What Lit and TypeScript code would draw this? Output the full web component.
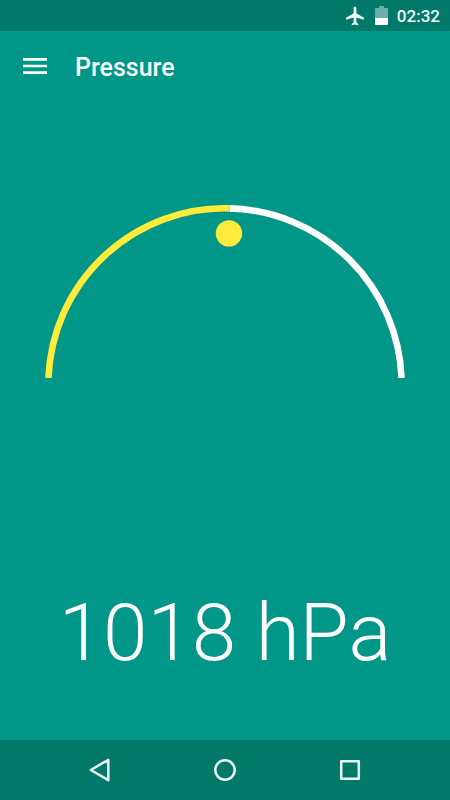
import { LitElement, html, css, svg } from "lit";
import { customElement, property } from "lit/decorators.js";

const CX = 180;
const CY = 180;
const RADIUS = 176.7;

/** Point on the dial; 0 degrees is straight up, negative is to the left. */
function polar(angle: number, radius: number): [number, number] {
  const a = (angle * Math.PI) / 180;
  return [CX + radius * Math.sin(a), CY - radius * Math.cos(a)];
}

function arc(from: number, to: number): string {
  const [x1, y1] = polar(from, RADIUS);
  const [x2, y2] = polar(to, RADIUS);
  return `M${x1} ${y1}A${RADIUS} ${RADIUS} 0 0 1 ${x2} ${y2}`;
}

@customElement("pressure-gauge")
export class PressureGauge extends LitElement {
  /** Needle angle in degrees from the top of the dial. */
  @property({ type: Number }) angle = 0;

  static styles = css`
    :host {
      display: block;
    }
    svg {
      display: block;
      width: 100%;
      height: auto;
    }
    .track,
    .fill {
      fill: none;
      stroke-width: 6.6;
    }
    .track {
      stroke: #fff;
    }
    .fill {
      stroke: #ffeb3b;
    }
    .knob {
      fill: #ffeb3b;
    }
  `;

  render() {
    const end = 87.7;
    const [kx, ky] = polar(this.angle, 151.7);
    return html`<svg viewBox="0 0 360 180" role="img" aria-label="Pressure gauge">
      ${svg`
        <path class="track" d=${arc(this.angle, end)} />
        <path class="fill" d=${arc(-end, this.angle)} />
        <circle class="knob" cx=${kx} cy=${ky} r="13.2" />
      `}
    </svg>`;
  }
}

@customElement("app-root")
export class AppRoot extends LitElement {
  static styles = css`
    :host {
      display: flex;
      flex-direction: column;
      min-height: 100vh;
      background: #009688;
      color: #fff;
      font-family: Roboto, sans-serif;
    }
    .status {
      display: flex;
      align-items: center;
      justify-content: flex-end;
      gap: 9px;
      height: 31px;
      padding-right: 10px;
      background: #00796b;
      color: #f2f8f7;
      font-size: 17px;
      font-weight: 500;
      line-height: 32px;
    }
    .plane {
      width: 22px;
      height: 22px;
    }
    .battery {
      width: 13px;
      height: 19px;
    }
    .appbar {
      display: flex;
      align-items: center;
      gap: 28px;
      height: 70px;
      padding: 0 23px;
    }
    button {
      display: grid;
      place-items: center;
      margin: 0;
      padding: 0;
      border: 0;
      background: none;
      color: inherit;
      cursor: pointer;
    }
    .menu {
      width: 24px;
      height: 32px;
    }
    h1 {
      margin: 0;
      padding-top: 3px;
      font-size: 25px;
      line-height: 32px;
      font-weight: 500;
    }
    main {
      flex: 1;
      display: flex;
      flex-direction: column;
      justify-content: space-between;
      padding: 104px 10% 59px;
    }
    .reading {
      margin: 0;
      font-size: 80px;
      line-height: 96px;
      font-weight: 300;
      text-align: center;
      white-space: nowrap;
    }
    nav {
      display: flex;
      justify-content: center;
      gap: 77px;
      height: 60px;
      background: #00796b;
      color: #ebf4f3;
    }
    .key {
      width: 48px;
      height: 60px;
    }
    svg {
      display: block;
    }
  `;

  render() {
    return html`
      <div class="status">
        <svg class="plane" viewBox="-0.25 0.25 23.5 23.5" aria-hidden="true">
          <path
            fill="currentColor"
            d="M21 16v-2l-8-5V3.500c0-.83-.67-1.500-1.500-1.500S10 2.670 10 3.500V9l-8 5v2l8-2.500V19l-2 1.500V22l3.500-1 3.500 1v-1.500L13 19v-5.500l8 2.500z"
          />
        </svg>
        <svg class="battery" viewBox="0 0 13 19" aria-hidden="true">
          <path fill="#6bb0a8" d="M4 0h5v2h3q1 0 1 1v9H0V3q0-1 1-1h3z" />
          <path fill="#fff" d="M0 12h13v6q0 1-1 1H1q-1 0-1-1z" />
        </svg>
        <time>02:32</time>
      </div>
      <header class="appbar">
        <button class="menu" aria-label="Open menu">
          <svg width="24" height="16" viewBox="0 0 24 16">
            <path fill="currentColor" d="M0 0h24v2.700H0zM0 6.650h24v2.700H0zM0 13.300h24V16H0z" />
          </svg>
        </button>
        <h1>Pressure</h1>
      </header>
      <main>
        <pressure-gauge angle="1.5"></pressure-gauge>
        <p class="reading">1018 hPa</p>
      </main>
      <nav aria-label="System">
        <button class="key" aria-label="Back">
          <svg width="24" height="26" viewBox="0 0 24 26">
            <path
              d="M20.300 2.800v20.400L2.800 13z"
              fill="none"
              stroke="currentColor"
              stroke-width="2.500"
              stroke-linejoin="round"
            />
          </svg>
        </button>
        <button class="key" aria-label="Home">
          <svg width="24" height="24" viewBox="0 0 24 24">
            <circle cx="12" cy="12" r="9.700" fill="none" stroke="currentColor" stroke-width="2.500" />
          </svg>
        </button>
        <button class="key" aria-label="Recent apps">
          <svg width="24" height="24" viewBox="0 0 24 24">
            <rect
              x="3.200"
              y="3.200"
              width="17.600"
              height="17.600"
              fill="none"
              stroke="currentColor"
              stroke-width="2.500"
              stroke-linejoin="round"
            />
          </svg>
        </button>
      </nav>
    `;
  }
}
